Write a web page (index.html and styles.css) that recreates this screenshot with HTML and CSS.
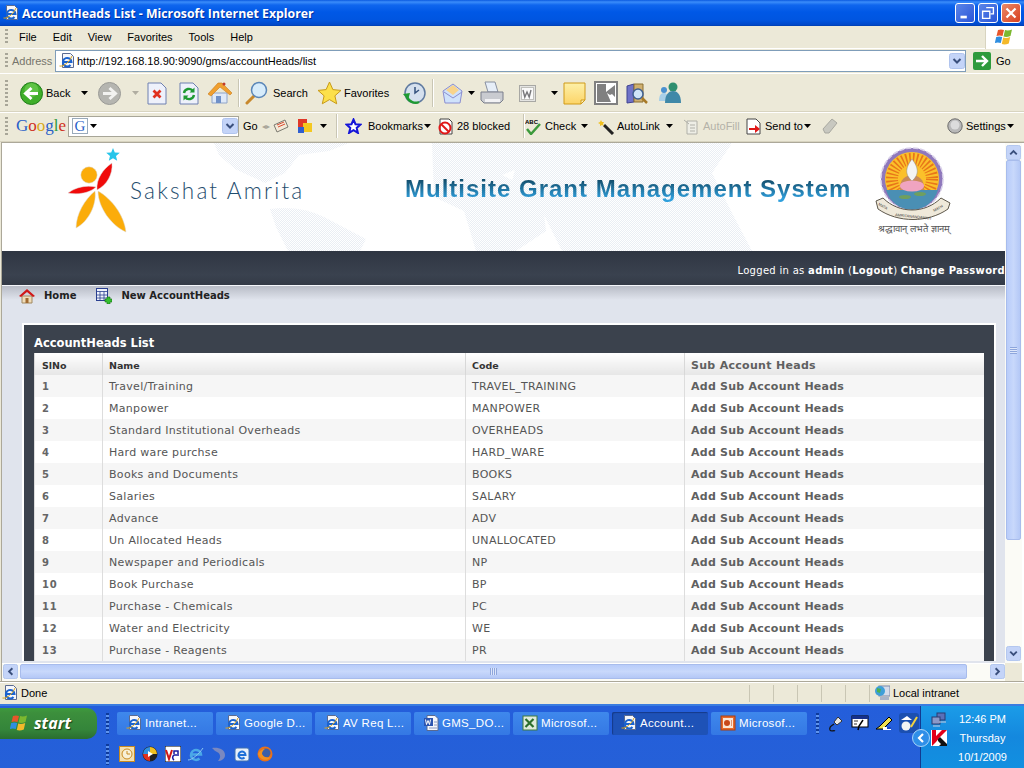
FILE: index.html
```html
<!DOCTYPE html>
<html lang="en">
<head>
    <meta charset="UTF-8">
    <title>AccountHeads List - Microsoft Internet Explorer</title>
    <link rel="stylesheet" href="styles.css">
</head>
<body>
    <!-- shared icons -->
    <svg class="defs" width="0" height="0">
        <symbol id="ie" viewBox="0 0 16 16">
            <path d="M3.500 .5h8l3 3v11h-11z" fill="#f6f7fb" stroke="#5a6a90"/>
            <path d="M4.500 9h8a4.300 4.300 0 1 0-1 3" fill="none" stroke="#1a63d0" stroke-width="2"/>
            <path d="M.5 13c4 1 10-4 12.500-10" fill="none" stroke="#d9a520"/>
        </symbol>
        <symbol id="arrow-down" viewBox="0 0 7 4">
            <path d="M0 0h7L3.500 4z" fill="#000"/>
        </symbol>
        <symbol id="chev-down" viewBox="0 0 16 16">
            <rect x=".5" y=".5" width="15" height="15" rx="2" fill="#c4d4f8" stroke="#b0c4ee"/>
            <path d="M4.500 6l3.500 3.500L11.500 6" fill="none" stroke="#3a4f7c" stroke-width="2"/>
        </symbol>
        <symbol id="chev-up" viewBox="0 0 16 16">
            <rect x=".5" y=".5" width="15" height="15" rx="2" fill="#c4d4f8" stroke="#b0c4ee"/>
            <path d="M4.500 10L8 6.500l3.500 3.500" fill="none" stroke="#3a4f7c" stroke-width="2"/>
        </symbol>
        <symbol id="chev-left" viewBox="0 0 16 16">
            <rect x=".5" y=".5" width="15" height="15" rx="2" fill="#c4d4f8" stroke="#b0c4ee"/>
            <path d="M10 4.500L6.500 8l3.500 3.500" fill="none" stroke="#3a4f7c" stroke-width="2"/>
        </symbol>
        <symbol id="chev-right" viewBox="0 0 16 16">
            <rect x=".5" y=".5" width="15" height="15" rx="2" fill="#c4d4f8" stroke="#b0c4ee"/>
            <path d="M6 4.500L9.500 8 6 11.500" fill="none" stroke="#3a4f7c" stroke-width="2"/>
        </symbol>
        <symbol id="word" viewBox="0 0 16 16">
            <path d="M4 .5h8l3 3v12H4z" fill="#f4f6fb" stroke="#5a6a90"/>
            <rect x="1" y="3" width="9" height="8" fill="#2c55b0"/>
            <path d="M2.500 4.500l1 5 1.500-4 1.500 4 1-5" fill="none" stroke="#fff"/>
            <path d="M11 7h3M11 10h3M6 13h8" stroke="#8a98c0"/>
        </symbol>
        <symbol id="excel" viewBox="0 0 16 16">
            <rect x="1" y="1" width="14" height="14" fill="#dfeadb" stroke="#3f7a3f"/>
            <path d="M3.500 4l8 8M11.500 4l-8 8" stroke="#2c6e2c" stroke-width="2.200"/>
        </symbol>
        <symbol id="ppt" viewBox="0 0 16 16">
            <rect x="1" y="1" width="14" height="14" fill="#e86a2c" stroke="#a83e10"/>
            <rect x="3" y="3" width="10" height="10" fill="#fbe7d6"/>
            <circle cx="7" cy="8" r="3" fill="#c8481a"/>
            <path d="M11 6h1M11 8h1M11 10h1" stroke="#c8481a"/>
        </symbol>
    </svg>

    <header class="titlebar">
        <svg class="icon16"><use href="#ie"/></svg>
        <span class="title-text">AccountHeads List - Microsoft Internet Explorer</span>
        <div class="win-buttons">
            <span class="win-btn"><svg viewBox="0 0 20 20"><rect x="5" y="13" width="7" height="3" fill="#fff"/></svg></span>
            <span class="win-btn"><svg viewBox="0 0 20 20"><path d="M8 4h8v7h-3M4 8h8v8H4z" fill="none" stroke="#fff" stroke-width="1.500"/></svg></span>
            <span class="win-btn win-close"><svg viewBox="0 0 20 20"><path d="M5 5l10 10M15 5L5 15" stroke="#fff" stroke-width="2.500"/></svg></span>
        </div>
    </header>

    <nav class="menubar">
        <span class="grip"></span>
        <ul class="menu">
            <li>File</li><li>Edit</li><li>View</li><li>Favorites</li><li>Tools</li><li>Help</li>
        </ul>
        <div class="flag-box">
            <svg width="20" height="18" viewBox="0 0 20 18">
                <path d="M3 2q3-1 6 0l-1.500 6q-3-1-6 0z" fill="#e8562a"/>
                <path d="M10 2q3 1 7-.5L15.500 8q-4 1.500-7 .5z" fill="#7cb82f"/>
                <path d="M1.200 9q3-1 6 0L5.800 15q-3-1-6 0z" fill="#2f8ee0"/>
                <path d="M8.200 9.500q3 1 7-.5L13.800 15.500q-4 1.500-7 .5z" fill="#f4b92a"/>
            </svg>
        </div>
    </nav>

    <div class="addressbar">
        <span class="grip"></span>
        <span class="address-label">Address</span>
        <div class="address-input">
            <svg class="icon16"><use href="#ie"/></svg>
            <span class="url">http://192.168.18.90:9090/gms/accountHeads/list</span>
            <svg class="icon16 address-drop"><use href="#chev-down"/></svg>
        </div>
        <svg class="go-icon" viewBox="0 0 18 18">
            <rect width="18" height="18" rx="2" fill="#2e9a3c"/>
            <path d="M3 9h10M9 4l5 5-5 5" fill="none" stroke="#fff" stroke-width="2.400"/>
        </svg>
        <span class="go-text">Go</span>
    </div>

    <div class="toolbar">
        <span class="grip"></span>
        <div class="tools-main">
            <svg width="23" height="23" viewBox="0 0 23 23">
                <circle cx="11.500" cy="11.500" r="11" fill="#3fae2a" stroke="#1f7d1a"/>
                <circle cx="11.500" cy="8" r="7" fill="#7fd860" opacity=".5"/>
                <path d="M18 11.500H7M11.500 6l-6 5.500 6 5.500" fill="none" stroke="#fff" stroke-width="3"/>
            </svg>
            <span>Back</span>
            <svg class="arrow"><use href="#arrow-down"/></svg>
            <svg width="23" height="23" viewBox="0 0 23 23">
                <circle cx="11.500" cy="11.500" r="11" fill="#b5b5b0" stroke="#9a9a96"/>
                <path d="M5 11.500h11M11.500 6l6 5.500-6 5.500" fill="none" stroke="#f2f2f0" stroke-width="3"/>
            </svg>
            <svg class="arrow arrow-off"><use href="#arrow-down"/></svg>
            <svg width="20" height="23" viewBox="0 0 20 23">
                <path d="M1 1h13l5 5v16H1z" fill="#eef1fb" stroke="#6f80b0"/>
                <path d="M6.500 8.500l7 7M13.500 8.500l-7 7" stroke="#e0301e" stroke-width="2.800"/>
            </svg>
            <svg width="20" height="23" viewBox="0 0 20 23">
                <path d="M1 1h13l5 5v16H1z" fill="#eef1fb" stroke="#6f80b0"/>
                <path d="M5 11a5 5 0 0 1 9-2M15 13a5 5 0 0 1-9 2" fill="none" stroke="#1f9a32" stroke-width="2.400"/>
                <path d="M15.500 5.500v5h-5zM4.500 18.500v-5h5z" fill="#1f9a32"/>
            </svg>
            <svg width="24" height="24" viewBox="0 0 24 24">
                <path d="M4 12v10h15V12z" fill="#dfe9f8" stroke="#8fa4c8"/>
                <path d="M0 13L10 2h4l10 10-2 2L12 6 3 15z" fill="#f0a030" stroke="#c87a1c" stroke-width=".6"/>
                <rect x="8" y="15" width="5" height="7" fill="#6f90c8"/>
                <circle cx="16" cy="3" r="1.500" fill="#c0392b"/>
            </svg>
            <span class="sep"></span>
            <svg width="24" height="24" viewBox="0 0 24 24">
                <path d="M9 15l-7 7" stroke="#c8882c" stroke-width="3" stroke-linecap="round"/>
                <circle cx="14" cy="9" r="7.500" fill="#d7ecfb" stroke="#5a86b8" stroke-width="1.500"/>
            </svg>
            <span>Search</span>
            <svg width="25" height="24" viewBox="0 0 25 24">
                <path d="M12.500 1l3.400 7.600 8.100.8-6.100 5.400 1.800 8-7.200-4.200-7.200 4.200 1.800-8L1 9.400l8.100-.8z" fill="#fce04a" stroke="#c89a18"/>
            </svg>
            <span>Favorites</span>
            <svg width="24" height="24" viewBox="0 0 24 24">
                <circle cx="13" cy="12" r="10" fill="#d5e0ee" stroke="#5f7aa0" stroke-width="1.500"/>
                <path d="M13 6v6l4-3" fill="none" stroke="#33507c" stroke-width="1.500"/>
                <path d="M1 13l7-1-2 7z" fill="#1f9a32"/>
                <path d="M5 16c2 5 8 7 12 5" fill="none" stroke="#1f9a32" stroke-width="2.500"/>
            </svg>
            <span class="sep"></span>
            <svg width="21" height="21" viewBox="0 0 21 21">
                <path d="M1 8l10-7 9 7 -2 12H3z" fill="#cfe2fb" stroke="#8a8ed0"/>
                <path d="M4 7l7-5 6 5-6 5z" fill="#f8d48c"/>
                <path d="M2 9l9 6 9-6" fill="none" stroke="#8a8ed0"/>
            </svg>
            <svg class="arrow"><use href="#arrow-down"/></svg>
            <svg width="24" height="24" viewBox="0 0 24 24">
                <path d="M5 1h10l3 10H8z" fill="#e6eef8" stroke="#8890a0"/>
                <path d="M1 11h22v8l-3 3H4l-3-3z" fill="#c9cbd0" stroke="#7a7f8c"/>
                <path d="M5 18h15v3H5z" fill="#f2f2f4"/>
            </svg>
            <svg width="17" height="17" viewBox="0 0 17 17">
                <rect x=".5" y=".5" width="16" height="16" fill="#e4e4e2" stroke="#a8a8a4"/>
                <rect x="2.500" y="2.500" width="12" height="12" fill="#fafafa" stroke="#c0c0bc"/>
                <path d="M4 5l1.800 7 2.200-5 2.200 5L12 5" fill="none" stroke="#77777a" stroke-width="1.400"/>
            </svg>
            <svg class="arrow"><use href="#arrow-down"/></svg>
            <svg width="23" height="23" viewBox="0 0 23 23">
                <defs>
                    <linearGradient id="note" x1="0" y1="0" x2="0" y2="1">
                        <stop offset="0" stop-color="#fdf0a8"/><stop offset="1" stop-color="#fcd468"/>
                    </linearGradient>
                </defs>
                <path d="M1 1h21v17l-4 4H1z" fill="url(#note)" stroke="#d09a18"/>
                <path d="M22 18h-4v4z" fill="#fdf3c0" stroke="#d09a18"/>
            </svg>
            <svg width="24" height="24" viewBox="0 0 24 24">
                <rect x="1" y="1" width="22" height="22" fill="#fff" stroke="#808080" stroke-width="2"/>
                <rect x="3" y="3" width="18" height="18" fill="#808080"/>
                <path d="M12 3h9v1l-9 7zM13 12l3 2 2-1 3 3v5h-4z" fill="#fff"/>
            </svg>
            <svg width="22" height="24" viewBox="0 0 22 24">
                <path d="M1 5l7-2v18l-7 1z" fill="#6f72c8" stroke="#3f4290"/>
                <path d="M8 3h9v18H8z" fill="#d0b070" stroke="#8a6f30"/>
                <circle cx="12" cy="13" r="5" fill="#cfe4f8" stroke="#3f5f90" stroke-width="1.500"/>
                <path d="M16 17l5 5" stroke="#a87a28" stroke-width="2.500"/>
            </svg>
            <svg width="24" height="22" viewBox="0 0 24 22">
                <circle cx="6" cy="8" r="3" fill="#4a90d0"/>
                <path d="M1 19c0-6 2-8 5-8s4 2 4 8z" fill="#a8cfe8"/>
                <circle cx="15" cy="5" r="4.500" fill="#2f8f70"/>
                <path d="M7 21c0-9 4-12 8-12s8 3 8 12z" fill="#3f88a8"/>
            </svg>
        </div>
    </div>

    <div class="googlebar">
        <span class="grip"></span>
        <div class="tools-google">
            <span class="google-logo"><b class="g-blue">G</b><b class="g-red">o</b><b class="g-yellow">o</b><b class="g-blue">g</b><b class="g-green">l</b><b class="g-red">e</b></span>
            <div class="google-input">
                <span class="g-mark">G</span>
                <svg class="arrow"><use href="#arrow-down"/></svg>
                <svg class="icon16 address-drop"><use href="#chev-down"/></svg>
            </div>
            <span>Go</span>
            <span class="mini-arrows">◂▸</span>
            <svg width="16" height="14" viewBox="0 0 16 14">
                <path d="M1 6l11-5 3 7-11 5z" fill="#f4ead8" stroke="#7a7a70"/>
                <path d="M4 6l7-3M5 8l7-3" stroke="#d84a30"/>
            </svg>
            <svg width="16" height="16" viewBox="0 0 16 16">
                <rect x="1" y="1" width="9" height="8" fill="#e03828"/>
                <rect x="6" y="5" width="9" height="9" fill="#f4c820"/>
                <rect x="1" y="9" width="6" height="6" fill="#2f5fd0"/>
            </svg>
            <svg class="arrow"><use href="#arrow-down"/></svg>
            <span class="sep"></span>
            <svg width="17" height="16" viewBox="0 0 17 16">
                <path d="M8.500 1.500l2 4.700 5 .4-3.800 3.300 1.200 5-4.400-2.700-4.400 2.700 1.200-5L1.500 6.600l5-.4z" fill="#fff" stroke="#1414d8" stroke-width="2"/>
            </svg>
            <span class="with-arrow">Bookmarks<svg class="arrow"><use href="#arrow-down"/></svg></span>
            <svg width="17" height="17" viewBox="0 0 17 17">
                <path d="M3 1h9l3 3v12H3z" fill="#fff" stroke="#444"/>
                <circle cx="8" cy="10" r="5.500" fill="none" stroke="#e01818" stroke-width="2"/>
                <path d="M4 6l8 8" stroke="#e01818" stroke-width="2"/>
            </svg>
            <span>28 blocked</span>
            <span class="sep"></span>
            <svg width="17" height="17" viewBox="0 0 17 17">
                <text x="0" y="6" class="abc">ABC</text>
                <path d="M2 11l4 5 9-10" fill="none" stroke="#3c9a3c" stroke-width="2.500"/>
            </svg>
            <span>Check</span>
            <svg class="arrow"><use href="#arrow-down"/></svg>
            <svg width="17" height="17" viewBox="0 0 17 17">
                <path d="M6 7l9 9" stroke="#222" stroke-width="3"/>
                <path d="M3 2l1 2 2 0-1 2 1 2-2-1-2 1 0-2-2-1 2-1z" fill="#f0c020"/>
            </svg>
            <span>AutoLink</span>
            <svg class="arrow"><use href="#arrow-down"/></svg>
            <svg width="17" height="17" viewBox="0 0 17 17">
                <path d="M4 3h10v13H4z" fill="#eeeee6" stroke="#b0b0a8"/>
                <path d="M1 2l5 4M7 7h5M7 10h5M7 13h5" stroke="#b0b0a8"/>
            </svg>
            <span class="disabled">AutoFill</span>
            <svg width="17" height="17" viewBox="0 0 17 17">
                <path d="M2 1h9l4 4v11H2z" fill="#fff" stroke="#444"/>
                <path d="M4 10h6V7l5 4-5 4v-3H4z" fill="#e01818"/>
            </svg>
            <span class="with-arrow">Send to<svg class="arrow"><use href="#arrow-down"/></svg></span>
            <svg width="16" height="16" viewBox="0 0 16 16">
                <path d="M1 11L10 1l5 4-8 10H3z" fill="#c8c8c0" stroke="#a8a8a0"/>
            </svg>
            <svg width="16" height="16" viewBox="0 0 16 16">
                <circle cx="8" cy="8" r="7.200" fill="#b8b8b8" stroke="#6c6c6c"/>
                <circle cx="8" cy="7" r="4.500" fill="#dcdcdc"/>
            </svg>
            <span class="with-arrow">Settings<svg class="arrow"><use href="#arrow-down"/></svg></span>
        </div>
    </div>

    <div class="viewport">
        <main class="page">
            <div class="site-header">
                <svg class="world" viewBox="0 0 1003 108" width="1003" height="108">
                    <defs>
                        <pattern id="dots" width="2" height="2" patternUnits="userSpaceOnUse">
                            <rect width="1" height="1" fill="#eaeef4"/>
                            <rect x="1" y="1" width="1" height="1" fill="#eaeef4"/>
                        </pattern>
                    </defs>
                    <g fill="url(#dots)">
                        <path d="M212 0h135l-20 8-30 4-14 18-20 10-30-14-16-14z"/>
                        <path d="M268 66q30-4 54 8l42 22-6 12h-72l-12-24z"/>
                        <path d="M430 0h90l10 20-30 12 40 20 4 36-30 20h-40l-12-40-30-14z"/>
                        <path d="M520 0h210l-20 30 20 40 20 38H560l-20-40-30-30z"/>
                    </g>
                </svg>
                <svg class="logo" viewBox="60 145 70 92" width="70" height="92">
                    <path d="M113 148l1.800 4.500 5 .3-3.800 3.200 1.200 4.800-4.200-2.600-4.200 2.600 1.200-4.800-3.800-3.200 5-.3z" fill="#26c5ea"/>
                    <circle cx="89" cy="175" r="8.200" fill="#fbac0a" stroke="#ddd" stroke-width=".5"/>
                    <path d="M97 190c-1-11 6-21 15-27 1 11-5 22-15 27z" fill="#f00a0a" stroke="#ddd" stroke-width=".5"/>
                    <path d="M68 193c8-6 18-8 28-6-6 6-18 8-28 6z" fill="#f00a0a" stroke="#ddd" stroke-width=".5"/>
                    <path d="M98 191c14 8 26 24 28 41-14-6-28-24-28-41z" fill="#fbac0a" stroke="#ddd" stroke-width=".5"/>
                    <path d="M95 191c-10 8-19 23-19 37 12-6 21-23 19-37z" fill="#fbac0a" stroke="#ddd" stroke-width=".5"/>
                </svg>
                <span class="brand">Sakshat Amrita</span>
                <h1 class="site-title">Multisite Grant Management System</h1>
                <div class="seal">
                    <svg viewBox="874 147 80 76" width="80" height="76">
                        <circle cx="912" cy="179" r="31" fill="#8f78bc" stroke="#d8d0e8" stroke-width="1.500" stroke-dasharray="5 2"/>
                        <circle cx="912" cy="179" r="27" fill="#fbc02a"/>
                        <circle cx="912" cy="179" r="20" fill="none" stroke="#e8761a" stroke-width="12" stroke-dasharray="1.500 2"/>
                        <path d="M886 190h52a27 27 0 0 1-52 0z" fill="#4a8fb4"/>
                        <path d="M900 190v-3a12 12 0 0 1 24 0v3z" fill="#c98a58"/>
                        <path d="M912 159c6 8 8 15 0 22-8-7-6-14 0-22z" fill="#f4f4f4" stroke="#888" stroke-width=".5"/>
                        <ellipse cx="912" cy="186" rx="12" ry="5.500" fill="#f0a4c0"/>
                        <ellipse cx="905" cy="197" rx="6" ry="2" fill="#6f9f5f"/>
                        <ellipse cx="920" cy="194" rx="6" ry="2" fill="#6f9f5f"/>
                        <path d="M876 201l7-3c16 16 42 16 58 0l9 5-2 6c-20 14-50 14-70 0z" fill="#efe9da" stroke="#5e584c"/>
                        <text class="seal-text" transform="translate(878 205) rotate(28)">MATA</text>
                        <text class="seal-text" transform="translate(895 216) rotate(6)">AMRITANANDAMAYI</text>
                        <text class="seal-text" transform="translate(934 212) rotate(-28)">MATH</text>
                    </svg>
                    <span class="motto">श्रद्धावान् लभते ज्ञानम्</span>
                </div>
            </div>
            <div class="userbar">
                Logged in as <b>admin</b> (<b>Logout</b>) <b>Change Password</b>
            </div>
            <div class="content">
                <div class="actions">
                    <a class="action">
                        <svg width="16" height="16" viewBox="0 0 16 16">
                            <path d="M3 8v7h10V8z" fill="#f0dcb8" stroke="#a08860"/>
                            <path d="M0 8l8-7 8 7-2 1-6-5-6 5z" fill="#d01818"/>
                            <rect x="6.500" y="10" width="3" height="5" fill="#a06a30"/>
                        </svg>
                        Home
                    </a>
                    <a class="action">
                        <svg width="16" height="16" viewBox="0 0 16 16">
                            <rect x=".5" y=".5" width="11" height="12" fill="#eef2fb" stroke="#2a3f90"/>
                            <path d="M.5 3.500h11M4 3.500v9M8 3.500v9M.5 7h11M.5 10h11" stroke="#2a3f90" stroke-width=".8"/>
                            <path d="M9 11h2V9h3v2h2v3h-2v2h-3v-2H9z" fill="#35c030" stroke="#157010" stroke-width=".6"/>
                        </svg>
                        New AccountHeads
                    </a>
                </div>
                <section class="panel">
                    <h2 class="panel-title">AccountHeads List</h2>
                    <table class="list">
                        <thead>
                            <tr><th>SlNo</th><th>Name</th><th>Code</th><th class="sub-head">Sub Account Heads</th></tr>
                        </thead>
                        <tbody>
                            <tr><td class="num">1</td><td>Travel/Training</td><td>TRAVEL_TRAINING</td><td class="sub">Add Sub Account Heads</td></tr>
                            <tr><td class="num">2</td><td>Manpower</td><td>MANPOWER</td><td class="sub">Add Sub Account Heads</td></tr>
                            <tr><td class="num">3</td><td>Standard Institutional Overheads</td><td>OVERHEADS</td><td class="sub">Add Sub Account Heads</td></tr>
                            <tr><td class="num">4</td><td>Hard ware purchse</td><td>HARD_WARE</td><td class="sub">Add Sub Account Heads</td></tr>
                            <tr><td class="num">5</td><td>Books and Documents</td><td>BOOKS</td><td class="sub">Add Sub Account Heads</td></tr>
                            <tr><td class="num">6</td><td>Salaries</td><td>SALARY</td><td class="sub">Add Sub Account Heads</td></tr>
                            <tr><td class="num">7</td><td>Advance</td><td>ADV</td><td class="sub">Add Sub Account Heads</td></tr>
                            <tr><td class="num">8</td><td>Un Allocated Heads</td><td>UNALLOCATED</td><td class="sub">Add Sub Account Heads</td></tr>
                            <tr><td class="num">9</td><td>Newspaper and Periodicals</td><td>NP</td><td class="sub">Add Sub Account Heads</td></tr>
                            <tr><td class="num">10</td><td>Book Purchase</td><td>BP</td><td class="sub">Add Sub Account Heads</td></tr>
                            <tr><td class="num">11</td><td>Purchase - Chemicals</td><td>PC</td><td class="sub">Add Sub Account Heads</td></tr>
                            <tr><td class="num">12</td><td>Water and Electricity</td><td>WE</td><td class="sub">Add Sub Account Heads</td></tr>
                            <tr><td class="num">13</td><td>Purchase - Reagents</td><td>PR</td><td class="sub">Add Sub Account Heads</td></tr>
                        </tbody>
                    </table>
                </section>
            </div>
        </main>
        <div class="vscroll">
            <svg class="sb-btn"><use href="#chev-up"/></svg>
            <div class="vthumb"><span class="vgrip"></span></div>
            <div class="sb-track"></div>
            <svg class="sb-btn"><use href="#chev-down"/></svg>
        </div>
        <div class="hscroll">
            <svg class="sb-btn"><use href="#chev-left"/></svg>
            <div class="hthumb"><span class="hgrip"></span></div>
            <div class="sb-track"></div>
            <svg class="sb-btn"><use href="#chev-right"/></svg>
        </div>
        <div class="sb-corner"></div>
    </div>

    <footer class="statusbar">
        <svg class="icon16"><use href="#ie"/></svg>
        <span class="status-text">Done</span>
        <span class="cell"></span><span class="cell"></span><span class="cell"></span><span class="cell"></span><span class="cell"></span>
        <span class="zone">
            <svg class="icon16" viewBox="0 0 16 16">
                <rect x="5" y="1" width="11" height="10" fill="#d5dcea" stroke="#7a88a8"/>
                <circle cx="6" cy="6" r="5" fill="#3f9fd8"/>
                <path d="M3 3l4 1-1 4-3-1z" fill="#4cb050"/>
                <rect x="6" y="12" width="9" height="3" fill="#aab4c8"/>
            </svg>
            Local intranet
        </span>
    </footer>

    <div class="taskbar">
        <div class="task-row">
            <div class="start">
                <svg width="20" height="18" viewBox="0 0 20 18">
                    <path d="M3 2q3-1 6 0l-1.500 6q-3-1-6 0z" fill="#e8562a"/>
                    <path d="M10 2q3 1 7-.5L15.500 8q-4 1.500-7 .5z" fill="#7cb82f"/>
                    <path d="M1.200 9q3-1 6 0L5.800 15q-3-1-6 0z" fill="#2f8ee0"/>
                    <path d="M8.200 9.500q3 1 7-.5L13.800 15.500q-4 1.500-7 .5z" fill="#f4b92a"/>
                </svg>
                <span>start</span>
            </div>
            <span class="task-grip"></span>
            <div class="task-buttons">
                <div class="task"><svg class="icon16"><use href="#ie"/></svg><span>Intranet...</span></div>
                <div class="task"><svg class="icon16"><use href="#ie"/></svg><span>Google D...</span></div>
                <div class="task"><svg class="icon16"><use href="#ie"/></svg><span>AV Req L...</span></div>
                <div class="task"><svg class="icon16"><use href="#word"/></svg><span>GMS_DO...</span></div>
                <div class="task"><svg class="icon16"><use href="#excel"/></svg><span>Microsof...</span></div>
                <div class="task task-active"><svg class="icon16"><use href="#ie"/></svg><span>Account...</span></div>
                <div class="task"><svg class="icon16"><use href="#ppt"/></svg><span>Microsof...</span></div>
            </div>
            <span class="task-grip"></span>
            <div class="lang-icons">
                <svg width="18" height="18" viewBox="0 0 18 18"><path d="M11 3l4 4-5 4-3-3z" fill="#e8e8e8" stroke="#333"/><path d="M7 10c-3 2-5 3-4 6 1 2 4 0 5 1" fill="none" stroke="#111" stroke-width="1.300"/></svg>
                <svg width="18" height="18" viewBox="0 0 18 18"><rect x="1" y="2" width="16" height="11" fill="#fff" stroke="#000"/><rect x="1" y="2" width="16" height="3" fill="#16308a"/><path d="M12 6l-4 6-1 4" stroke="#000" fill="none" stroke-width="1.500"/><path d="M3 7h4M3 10h3" stroke="#333"/></svg>
                <svg width="18" height="18" viewBox="0 0 18 18"><path d="M1 15l4-3 9-9 3 3-9 9z" fill="#f0e050" stroke="#000"/><path d="M8 16h8v-3H8z" fill="#fff"/><path d="M12 14h4" stroke="#1848c8" stroke-width="2"/></svg>
                <span class="lang-on"><svg width="18" height="18" viewBox="0 0 18 18"><path d="M1 6l6-4 5 4z" fill="#fff"/><circle cx="6" cy="12" r="4.500" fill="#f4f4f4"/><path d="M11 13L17 3" stroke="#f0d040" stroke-width="2"/></svg></span>
            </div>
            <div class="tray">
                <svg class="tray-arrow" width="18" height="18" viewBox="0 0 18 18"><circle cx="9" cy="9" r="8.500" fill="#2f8fe8" stroke="#a8d4f8"/><path d="M11 5L7 9l4 4" fill="none" stroke="#fff" stroke-width="2.200"/></svg>
                <div class="tray-icons">
                    <svg width="16" height="16" viewBox="0 0 16 16"><rect x="6" y="1" width="8" height="7" fill="#5a70b8" stroke="#2a3a70"/><rect x="1" y="5" width="8" height="7" fill="#8a98c8" stroke="#2a3a70"/><path d="M2 14h7M8 10h7" stroke="#ccd"/></svg>
                    <svg width="16" height="16" viewBox="0 0 16 16"><rect width="16" height="16" fill="#fff"/><path d="M1 0h4v6l6-6h5L9 7 5 12 1 16z" fill="#e2001a"/><path d="M7 9l2-2 7 7v2h-8l2-2-3-3z" fill="#111"/></svg>
                </div>
                <div class="clock">
                    <span>12:46 PM</span>
                    <span>Thursday</span>
                    <span>10/1/2009</span>
                </div>
            </div>
        </div>
        <div class="quick-row">
            <span class="task-grip"></span>
            <div class="quick">
                <svg width="16" height="16" viewBox="0 0 16 16"><rect x=".5" y=".5" width="15" height="15" fill="#f4e0b0" stroke="#c88a20"/><circle cx="8" cy="8" r="5" fill="#f8f0d8" stroke="#c88a20"/><path d="M8 5v3h3" fill="none" stroke="#c88a20"/></svg>
                <svg width="16" height="16" viewBox="0 0 16 16"><circle cx="8" cy="8" r="7.500" fill="#222"/><path d="M8 1a7 7 0 0 1 7 7H8z" fill="#f0c020"/><path d="M1 8a7 7 0 0 1 7-7v7z" fill="#2f8fe0"/><path d="M1 8a7 7 0 0 0 7 7V8z" fill="#e03020"/><path d="M6 5l5 3-5 3z" fill="#fff"/></svg>
                <svg width="16" height="16" viewBox="0 0 16 16"><rect width="16" height="16" fill="#fff" stroke="#000"/><path d="M1 4l3 9 3-9" fill="none" stroke="#d01818" stroke-width="2"/><path d="M9 8v-3h4v3M9 14a3 3 0 0 1 0-5h5" fill="none" stroke="#1818a0" stroke-width="1.500"/></svg>
                <svg width="16" height="16" viewBox="0 0 16 16"><path d="M3 8.500h10a5 5 0 1 0-1.500 4" fill="none" stroke="#4aa8e8" stroke-width="2.500"/><path d="M0 14c4 0 11-6 15-12" fill="none" stroke="#8cc8f0"/></svg>
                <svg width="16" height="16" viewBox="0 0 16 16"><path d="M1 2c6-1 13 1 13 7 0 4-4 6-7 6 3-3 3-7-1-9-2-1-3-2-5-4z" fill="#7a88c0"/></svg>
                <svg width="16" height="16" viewBox="0 0 16 16"><rect x="1" y="2" width="14" height="13" rx="2" fill="#e8f0fb" stroke="#3f6fb0"/><path d="M4.500 9h7a3.500 3.500 0 1 0-1 2.500" fill="none" stroke="#1e6fd8" stroke-width="2"/></svg>
                <svg width="16" height="16" viewBox="0 0 16 16"><circle cx="8" cy="8" r="7.500" fill="#e8701a"/><circle cx="9" cy="7" r="4.500" fill="#3a5fa8"/><path d="M1 8c2 6 9 8 13 3-3 1-7 1-9-3 0-2 1-4 3-5-3 0-6 2-7 5z" fill="#f09020"/></svg>
            </div>
        </div>
    </div>
</body>
</html>
```

FILE: styles.css
```css
* {
    box-sizing: border-box;
}
html, body {
    margin: 0;
    padding: 0;
}
body {
    width: 1024px;
    height: 768px;
    overflow: hidden;
    display: flex;
    flex-direction: column;
    font-family: "Liberation Sans", sans-serif;
    font-size: 11px;
    color: #000;
    background: #ece9d8;
}
.defs {
    position: absolute;
}
.icon16 {
    width: 16px;
    height: 16px;
    flex: none;
}
.arrow {
    width: 7px;
    height: 4px;
    flex: none;
}
.arrow-off {
    opacity: .25;
}
.grip {
    width: 3px;
    height: 70%;
    margin-left: 5px;
    flex: none;
    background: repeating-linear-gradient(to bottom, #a8a698 0 2px, transparent 2px 4px);
}
.sep {
    width: 1px;
    height: 28px;
    background: #c9c6b4;
    box-shadow: 1px 0 0 #fff;
}

/* title bar */
.titlebar {
    height: 26px;
    flex: none;
    display: flex;
    align-items: center;
    padding: 0 3px;
    background: linear-gradient(to bottom, #0a5ae0 0, #3b8dfa 2px, #0f66ee 5px, #0058e6 12px, #0055e0 20px, #0047c8 25px, #003ca8 26px);
}
.title-text {
    margin-left: 3px;
    color: #fff;
    font-family: "Open Sans", sans-serif;
    font-weight: 700;
    font-size: 12.300px;
    white-space: nowrap;
    text-shadow: 1px 1px 0 #0030a0;
}
.win-buttons {
    margin-left: auto;
    display: flex;
    gap: 3px;
}
.win-btn {
    width: 20px;
    height: 20px;
    border: 1px solid #fff;
    border-radius: 3px;
    background: linear-gradient(135deg, #5b86e8, #2a55d8);
}
.win-btn svg {
    display: block;
    width: 18px;
    height: 18px;
}
.win-close {
    background: linear-gradient(135deg, #eb8a68, #d84020);
}

/* browser bars */
.menubar {
    height: 23px;
    flex: none;
    display: flex;
    align-items: center;
    border-bottom: 1px solid #fff;
}
.menu {
    list-style: none;
    display: flex;
    margin: 0 0 0 11px;
    padding: 0;
    gap: 16px;
}
.flag-box {
    margin-left: auto;
    width: 39px;
    height: 23px;
    background: #fff;
    border-left: 1px solid #d8d4c0;
    display: flex;
    align-items: center;
    justify-content: center;
}
.addressbar {
    height: 25px;
    flex: none;
    display: flex;
    align-items: center;
    border-bottom: 1px solid #fff;
}
.address-label {
    margin-left: 4px;
    width: 43px;
    color: #76756c;
}
.address-input {
    width: 911px;
    height: 22px;
    display: flex;
    align-items: center;
    padding: 0 0 0 3px;
    background: #fff;
    border: 1px solid #7f9db9;
}
.url {
    margin-left: 2px;
}
.address-drop {
    margin-left: auto;
}
.go-icon {
    width: 18px;
    height: 18px;
    margin-left: 7px;
}
.go-text {
    margin-left: 5px;
}
.toolbar {
    height: 39px;
    flex: none;
    display: flex;
    align-items: center;
    border-bottom: 1px solid #fff;
    box-shadow: inset 0 -1px 0 #d8d4c0;
}
.tools-main {
    margin-left: 12px;
    display: grid;
    align-items: center;
    justify-items: start;
    grid-template-columns: 26px 35px 17px 34px 15px 32px 29px 30px 7px 28px 44px 27px 58px 30px 10px 26px 12px 39px 32px 12px 31px 32px 32px 24px;
}
.googlebar {
    height: 29px;
    flex: none;
    display: flex;
    align-items: center;
    padding-bottom: 2px;
    border-bottom: 1px solid #d8d4c0;
}
.tools-google {
    margin-left: 8px;
    display: grid;
    align-items: center;
    justify-items: start;
    grid-template-columns: 52px 175px 19px 11px 24px 23px 16px 9px 23px 69px 20px 66px 2px 20px 36px 17px 19px 49px 17px 20px 42px 20px 57px 125px 19px 60px;
}
.tools-google .sep {
    height: 24px;
}
.google-logo {
    font-family: "Liberation Serif", serif;
    font-size: 17px;
}
.google-logo b {
    font-weight: 400;
}
.g-blue { color: #2a5fc8; }
.g-red { color: #d03020; }
.g-yellow { color: #d8a818; }
.g-green { color: #2f9a3c; }
.google-input {
    width: 171px;
    height: 21px;
    display: flex;
    align-items: center;
    gap: 2px;
    padding-left: 3px;
    background: #fff;
    border: 1px solid #a8a698;
}
.g-mark {
    width: 16px;
    height: 16px;
    line-height: 15px;
    text-align: center;
    font-family: "Liberation Serif", serif;
    font-size: 15px;
    color: #2a5fc8;
    border: 1px solid #9ab;
}
.mini-arrows {
    font-size: 8px;
    color: #a8a698;
}
.with-arrow {
    display: flex;
    align-items: center;
    gap: 1px;
    white-space: nowrap;
}
.disabled {
    color: #b4b2a8;
}
.abc {
    font-family: "Liberation Sans", sans-serif;
    font-size: 6px;
    font-weight: 700;
}

/* page area */
.viewport {
    width: 1023px;
    height: 539px;
    flex: none;
    margin-left: 1px;
    display: grid;
    grid-template-columns: 1003px 17px;
    grid-template-rows: 520px 18px;
    border-top: 1px solid #aca899;
    border-left: 1px solid #aca899;
    background: #fff;
}
.page {
    overflow: hidden;
    background: #e0e4ed;
    font-family: "DejaVu Sans", sans-serif;
}
.site-header {
    position: relative;
    height: 108px;
    display: flex;
    align-items: flex-start;
    background: #fff;
}
.world {
    position: absolute;
    left: 0;
    top: 0;
}
.logo {
    position: relative;
    margin: 2px 0 0 58px;
    flex: none;
}
.brand {
    position: relative;
    width: 275px;
    margin: 34px 0 0 0;
    font-family: "Lato", sans-serif;
    font-weight: 300;
    font-size: 22.500px;
    letter-spacing: 2.200px;
    color: #1f4d6e;
    white-space: nowrap;
}
.site-title {
    position: relative;
    margin: 32px 0 0 0;
    width: 469px;
    font-family: "Liberation Sans", sans-serif;
    font-size: 24px;
    letter-spacing: 1px;
    font-weight: 700;
    white-space: nowrap;
    color: transparent;
    background: linear-gradient(to bottom, #14506f 20%, #2f9fdc 85%);
    -webkit-background-clip: text;
    background-clip: text;
}
.seal {
    position: relative;
    width: 80px;
    margin-top: 4px;
    display: flex;
    flex-direction: column;
    align-items: center;
}
.seal svg {
    display: block;
}
.seal-text {
    font-family: "Liberation Sans", sans-serif;
    font-size: 3.800px;
    fill: #333;
}
.motto {
    margin-top: -1px;
    font-size: 9.500px;
    color: #555;
    white-space: nowrap;
}
.userbar {
    height: 35px;
    padding: 14px 0 0 0;
    text-align: right;
    color: #fff;
    font-size: 10px;
    letter-spacing: .3px;
    white-space: nowrap;
    border-bottom: 1px solid #f4f6fa;
    background: linear-gradient(to bottom, #2f3642, #3a424f 70%, #333a46);
}
.content {
    background: linear-gradient(to bottom, #b8bcc6 0, #e0e4ed 14px);
    padding: 1px 0 0 17px;
}
.actions {
    height: 36px;
    display: flex;
    gap: 20px;
}
.action {
    display: flex;
    gap: 9px;
    height: 17px;
    align-items: center;
    font-size: 10px;
    font-weight: 700;
    color: #222;
    white-space: nowrap;
}
.panel {
    width: 974px;
    margin-left: 3px;
    padding: 0 10px;
    border: 2px solid #fff;
    border-bottom: 0;
    background: #3b424d;
}
.panel-title {
    margin: 0;
    height: 28px;
    padding-top: 11px;
    color: #fff;
    font-size: 11.500px;
    font-weight: 700;
    line-height: 14px;
}
.list {
    width: 950px;
    table-layout: fixed;
    border-collapse: collapse;
    background: #fff;
    font-size: 11px;
    letter-spacing: .3px;
    color: #555;
}
.list th {
    height: 22px;
    padding: 2px 0 0 6px;
    text-align: left;
    font-size: 9.500px;
    letter-spacing: 0;
    color: #333;
    background: linear-gradient(to bottom, #fff, #e6e6e6);
    border-left: 1px solid #d8d8d8;
}
.list th:nth-child(1) { width: 68px; padding-left: 7px; }
.list th:nth-child(2) { width: 363px; }
.list th:nth-child(3) { width: 219px; }
.list .sub-head {
    font-size: 11px;
    letter-spacing: .3px;
    color: #606060;
}
.list td {
    height: 22px;
    padding: 0 0 0 6px;
    white-space: nowrap;
    border-left: 1px solid #ddd;
}
.list tbody tr:nth-child(odd) td {
    background: #f6f6f6;
}
.list .num {
    padding-left: 7px;
    font-weight: 700;
    font-size: 10px;
    letter-spacing: .8px;
    color: #666;
}
.list .sub {
    font-weight: 700;
    letter-spacing: .25px;
    color: #606060;
}

/* scrollbars */
.sb-btn {
    width: 15px;
    height: 15px;
    flex: none;
}
.vscroll {
    display: flex;
    flex-direction: column;
    align-items: center;
    padding: 2px 0;
    background: #fbfbf6;
}
.vthumb {
    height: 380px;
    width: 15px;
    display: flex;
    align-items: center;
    justify-content: center;
    flex: none;
    border-radius: 2px;
    background: linear-gradient(to right, #b8ccfa, #c8d8fb 50%, #b4c8f6);
    border: 1px solid #a8bcec;
}
.vgrip {
    width: 7px;
    height: 7px;
    background: repeating-linear-gradient(to bottom, #8ea6dc 0 1px, #dde6fa 1px 2px);
}
.sb-track {
    flex: 1;
}
.hscroll {
    display: flex;
    align-items: flex-start;
    padding-left: 1px;
    background: #fbfbf6;
    border-top: 1px solid #fff;
}
.hthumb {
    width: 947px;
    height: 15px;
    margin-left: 2px;
    display: flex;
    align-items: center;
    justify-content: center;
    flex: none;
    border-radius: 2px;
    background: linear-gradient(to bottom, #b8ccfa, #c8d8fb 50%, #b4c8f6);
    border: 1px solid #a8bcec;
}
.hgrip {
    width: 7px;
    height: 7px;
    background: repeating-linear-gradient(to right, #8ea6dc 0 1px, #dde6fa 1px 2px);
}
.sb-corner {
    background: #ece9d8;
}

/* status bar */
.statusbar {
    height: 23px;
    flex: none;
    display: flex;
    align-items: center;
    padding-left: 2px;
    border-top: 1px solid #aca899;
    box-shadow: inset 0 1px 0 #fff;
}
.status-text {
    margin-left: 3px;
    width: 728px;
}
.cell {
    width: 24px;
    height: 17px;
    border-left: 1px solid #c9c6b4;
}
.zone {
    display: flex;
    align-items: center;
    gap: 3px;
    height: 17px;
    padding-left: 4px;
    border-left: 1px solid #c9c6b4;
    white-space: nowrap;
}

/* task bar */
.taskbar {
    flex: 1;
    position: relative;
    border-top: 2px solid #3a7ce0;
    background: linear-gradient(to bottom, #245edb 0, #2560d8 100%);
    color: #fff;
}
.task-row {
    height: 34px;
    display: flex;
    align-items: center;
}
.start {
    width: 97px;
    height: 31px;
    flex: none;
    display: flex;
    align-items: center;
    gap: 4px;
    padding-left: 10px;
    border-radius: 0 10px 10px 0;
    background: linear-gradient(to bottom, #3e9a3e 0, #3c8f3c 15%, #34853a 70%, #2a6d30 100%);
    font-family: "Open Sans", sans-serif;
    font-style: italic;
    font-weight: 700;
    font-size: 16px;
    text-shadow: 1px 1px 1px #1a3d1a;
}
.task-grip {
    width: 3px;
    height: 21px;
    margin: 0 8px 0 9px;
    flex: none;
    background: repeating-linear-gradient(to bottom, #0e3a9a 0 2px, #5f94ec 2px 4px);
}
.task-buttons {
    display: flex;
    gap: 3px;
}
.task {
    width: 96px;
    height: 23px;
    display: flex;
    align-items: center;
    gap: 3px;
    padding-left: 9px;
    border-radius: 2px;
    background: linear-gradient(to bottom, #3f88ec, #3478e4);
    letter-spacing: .3px;
    font-size: 11.500px;
    white-space: nowrap;
}
.task-active {
    background: #1e52b7;
    box-shadow: inset 1px 1px 1px #153a8a;
}
.lang-icons {
    display: flex;
    align-items: center;
    gap: 6px;
}
.lang-on {
    display: flex;
    padding: 1px;
    border-radius: 3px;
    background: #1b4fb0;
}
.tray {
    position: absolute;
    right: 0;
    top: 0;
    bottom: 0;
    width: 104px;
    padding: 0 8px 0 10px;
    display: flex;
    border-left: 1px solid #123a90;
    background: linear-gradient(to bottom, #1b9ce8, #1488de 50%, #1290e0);
}
.tray-arrow {
    position: absolute;
    left: -9px;
    top: 23px;
}
.tray-icons {
    display: flex;
    flex-direction: column;
    gap: 2px;
    padding-top: 6px;
    width: 18px;
}
.clock {
    flex: 1;
    display: flex;
    flex-direction: column;
    align-items: center;
    gap: 4px;
    padding-top: 6px;
    font-size: 11px;
    line-height: 15px;
    white-space: nowrap;
}
.quick-row {
    height: 28px;
    display: flex;
    align-items: center;
    padding-left: 97px;
}
.quick {
    display: flex;
    gap: 7px;
    margin-left: 2px;
}
```
